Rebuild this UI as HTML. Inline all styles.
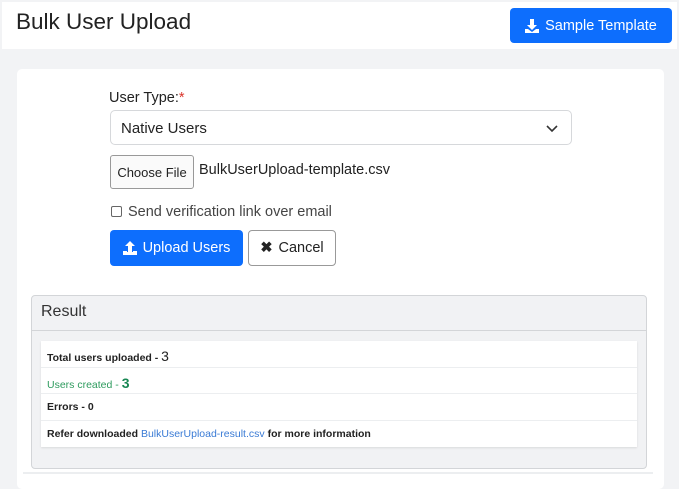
<!DOCTYPE html>
<html><head><style>
*{box-sizing:border-box;margin:0;padding:0}
body{width:679px;height:486px;background:#f2f3f5;font-family:"Liberation Sans",sans-serif;position:relative;overflow:hidden;color:#222}
.abs{position:absolute}
.hdr{left:2px;top:2px;width:675px;height:47px;background:#fff}
h1{position:absolute;left:16px;top:9px;font-size:22.5px;font-weight:400;color:#222}
.btn{position:absolute;border-radius:4px;font-size:14.5px;display:flex;align-items:center;justify-content:center;gap:6px}
.blue{background:#0d6efd;color:#fff}
.card{left:17px;top:69px;width:647px;height:420px;background:#fff;border-radius:5px}
.sel{left:110px;top:110px;width:462px;height:35px;border:1px solid #d6d8db;border-radius:5px;font-size:15px;padding:9px 10px}
.res{left:31px;top:295px;width:616px;height:174px;border:1px solid #d3d5d8;border-radius:4px;background:#f1f2f4}
.rh{height:35px;border-bottom:1px solid #d3d5d8;font-size:16px;padding:7px 9px;color:#333}
.rows{position:absolute;left:9px;top:45px;width:596px;background:#fff;box-shadow:0 1px 2px rgba(0,0,0,.1)}
.row{height:26.5px;border-bottom:1px solid #eceef0;font-size:10.5px;font-weight:700;padding:7px 6px}
</style></head><body>
<div class="abs hdr"></div>
<h1>Bulk User Upload</h1>
<div class="btn blue" style="left:510px;top:8px;width:162px;height:35px"><svg width="14" height="14" viewBox="0 0 14 14"><path d="M5 0h4v6h3l-5 5-5-5h3z M0 10h3l4 3 4-3h3v4H0z" fill="#fff"/></svg>Sample Template</div>
<div class="abs card"></div>
<div class="abs" style="left:109px;top:90px;font-size:14.5px">User Type:<span style="color:#d9342b">*</span></div>
<div class="abs sel">Native Users<svg class="abs" style="right:13px;top:14px" width="12" height="8" viewBox="0 0 12 8"><path d="M1 1l5 5 5-5" stroke="#333" stroke-width="1.6" fill="none"/></svg></div>
<div class="btn" style="left:110px;top:155px;width:84px;height:34px;border:1px solid #999;border-radius:3px;font-size:13px;background:#fafafa">Choose File</div>
<div class="abs" style="left:199px;top:162px;font-size:14.5px">BulkUserUpload-template.csv</div>
<div class="abs" style="left:111px;top:206px;width:11px;height:11px;border:1px solid #666;border-radius:2px"></div>
<div class="abs" style="left:128px;top:204px;font-size:14.5px;color:#444">Send verification link over email</div>
<div class="btn blue" style="left:110px;top:230px;width:133px;height:36px"><svg width="14" height="14" viewBox="0 0 14 14"><path d="M7 0l5 5H9v6H5V5H2z M0 10h4v1h6v-1h4v4H0z" fill="#fff"/></svg>Upload Users</div>
<div class="btn" style="left:248px;top:230px;width:88px;height:36px;border:1px solid #999;color:#222"><span style="font-weight:700">✖</span>Cancel</div>
<div class="abs res"><div class="rh">Result</div>
<div class="rows">
<div class="row">Total users uploaded - <span style="font-size:14px;font-weight:400">3</span></div>
<div class="row" style="color:#2e9b5e;font-weight:400">Users created - <span style="font-size:14px;font-weight:700;color:#198754">3</span></div>
<div class="row">Errors - 0</div>
<div class="row" style="border:none">Refer downloaded <span style="color:#3a7bd5;font-weight:400">BulkUserUpload-result.csv</span> for more information</div>
</div></div>
<div class="abs" style="left:23px;top:472px;width:630px;height:2px;background:#eceef0"></div>
</body></html>
